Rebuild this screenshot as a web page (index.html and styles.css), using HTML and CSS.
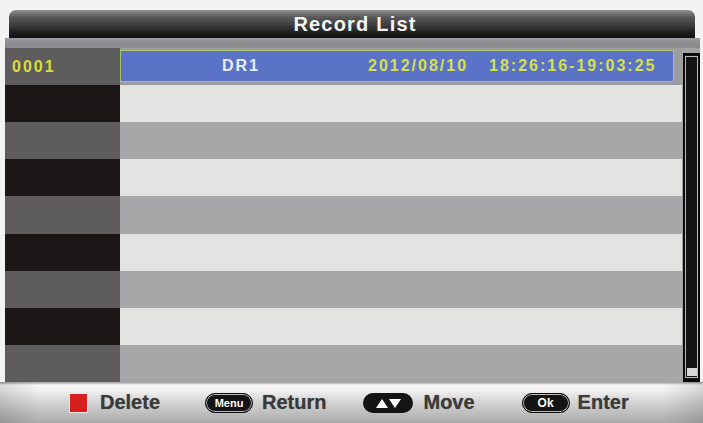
FILE: index.html
```html
<!DOCTYPE html>
<html>
<head>
<meta charset="utf-8">
<link rel="stylesheet" href="styles.css">
</head>
<body>
<div class="screen">
  <div class="title">Record List</div>
  <div class="subbar"></div>
  <div class="list">
    <div class="ids">
      <div class="id gray">0001</div>
      <div class="id black"></div>
      <div class="id gray"></div>
      <div class="id black"></div>
      <div class="id gray"></div>
      <div class="id black"></div>
      <div class="id gray"></div>
      <div class="id black"></div>
      <div class="id gray"></div>
    </div>
    <div class="rows">
      <div class="row sel">
        <div class="selbox">
          <span class="name">DR1</span>
          <span class="date">2012/08/10</span>
          <span class="time">18:26:16-19:03:25</span>
        </div>
      </div>
      <div class="row light"></div>
      <div class="row gray"></div>
      <div class="row light"></div>
      <div class="row gray"></div>
      <div class="row light"></div>
      <div class="row gray"></div>
      <div class="row light"></div>
      <div class="row gray"></div>
    </div>
    <div class="scrollcol">
      <div class="scrollbar">
        <div class="track"><div class="thumb"></div></div>
      </div>
    </div>
  </div>
  <div class="bottom">
    <div class="item del"><span class="redkey"></span><span class="label">Delete</span></div>
    <div class="item ret"><span class="pill ring">Menu</span><span class="label">Return</span></div>
    <div class="item mov"><span class="pill arrows"><svg width="30" height="12" viewBox="0 0 30 12"><polygon points="3,11 9,2 15,11" fill="#fff"/><polygon points="16,2 28,2 22,11" fill="#fff"/></svg></span><span class="label">Move</span></div>
    <div class="item ent"><span class="pill ring ok">Ok</span><span class="label">Enter</span></div>
  </div>
</div>
</body>
</html>
```
FILE: styles.css
```css
html, body {
  margin: 0;
  padding: 0;
}
body {
  width: 703px;
  height: 423px;
  overflow: hidden;
  background: #f2f2f2;
  font-family: "Liberation Sans", Arial, sans-serif;
}
.screen {
  display: flex;
  flex-direction: column;
  height: 423px;
  padding-top: 10px;
  box-sizing: border-box;
}
.title {
  height: 28px;
  margin: 0 8px 0 9px;
  border-radius: 7px 7px 0 0;
  background: linear-gradient(to bottom, #8e8e8e 0, #5a5a5a 25%, #3c3c3c 55%, #1a1a1a 85%, #101010 100%);
  color: #f4f4f4;
  font-weight: bold;
  font-size: 20px;
  letter-spacing: 1.2px;
  line-height: 28px;
  text-align: center;
  padding-left: 6px;
}
.subbar {
  height: 10px;
  margin: 0 3px 0 5px;
  background: linear-gradient(to bottom, #a2a0a4 0, #8e8c90 40%, #8a8a8c 100%);
}
.list {
  display: flex;
  height: 334px;
  margin: 0 3px 0 5px;
}
.ids {
  width: 115px;
  display: grid;
  grid-template-rows: repeat(9, 1fr);
}
.id {
  display: flex;
  align-items: center;
  padding-left: 7px;
  color: #dcdc3c;
  font-weight: bold;
  font-size: 16px;
  letter-spacing: 2px;
}
.id.gray { background: #5e5c5c; }
.id.black { background: #1b1717; }
.rows {
  flex: 1;
  display: grid;
  grid-template-rows: repeat(9, 1fr);
}
.row.light { background: #e3e3e1; }
.row.gray { background: #a7a7a9; }
.row.sel {
  background: #9c9c9e;
  padding: 2px 8px 3px 0;
  display: flex;
}
.selbox {
  flex: 1;
  background: #5b73c6;
  border: 1.5px solid #a6c46a;
  display: grid;
  grid-template-columns: 247px 121px auto;
  align-items: center;
  font-weight: bold;
  font-size: 16px;
  letter-spacing: 2px;
}
.name {
  padding-left: 101px;
  color: #e8eef8;
}
.date, .time {
  color: #d6e04a;
}
.scrollcol {
  width: 18px;
  background: #a2a2a4;
  padding-top: 5px;
  display: flex;
}
.scrollbar {
  flex: 1;
  margin-left: 1px;
  background: #111;
  border: 2px solid #0a0a0a;
  display: flex;
}
.track {
  flex: 1;
  border: 1px solid #b8b8b8;
  margin: 1px 0 2px 0;
  background: #141414;
  display: flex;
  flex-direction: column;
  justify-content: flex-end;
  align-items: center;
}
.thumb {
  width: 10px;
  height: 8px;
  background: #d8d8d8;
  margin-bottom: 1px;
}
.bottom {
  height: 41px;
  display: flex;
  align-items: center;
  padding-left: 70px;
  background:
    linear-gradient(to right, rgba(0,0,0,0.12) 0, rgba(0,0,0,0) 40px, rgba(0,0,0,0) 663px, rgba(0,0,0,0.12) 100%),
    linear-gradient(to bottom, #9a9a9a 0, #f6f6f6 3px, #f2f2f2 8px, #d8d8d8 45%, #aaaaaa 100%);
}
.item {
  display: flex;
  align-items: center;
}
.item.ret { margin-left: 45px; }
.item.mov { margin-left: 37px; }
.item.ent { margin-left: 47px; }
.label {
  color: #3a3a3a;
  font-weight: bold;
  font-size: 20px;
  text-shadow: 0 0 1px rgba(40,40,40,0.5);
}
.redkey {
  width: 17px;
  height: 18px;
  background: #d81e1e;
  box-shadow: 0 0 0 1px #f4e6e6;
  margin-right: 13px;
}
.pill {
  width: 48px;
  height: 20px;
  border-radius: 10px;
  background: #141414;
  color: #fff;
  font-weight: bold;
  font-size: 11px;
  display: flex;
  align-items: center;
  justify-content: center;
  box-sizing: border-box;
  margin-right: 9px;
}
.pill.ring {
  border: 1.5px solid #0a0a0a;
  box-shadow: inset 0 0 0 1px #bdbdbd;
}
.pill.arrows {
  width: 50px;
  margin-right: 10px;
}
.pill.ok {
  font-size: 12px;
  margin-right: 8px;
}
```
